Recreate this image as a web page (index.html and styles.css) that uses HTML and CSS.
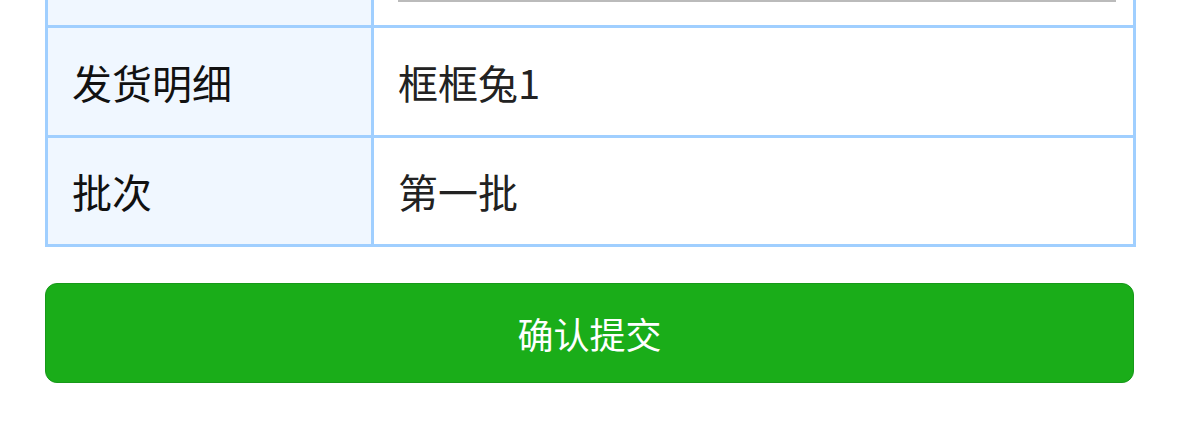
FILE: index.html
```html
<!DOCTYPE html>
<html lang="zh-CN">
<head>
<meta charset="utf-8">
<title>发货</title>
<link rel="stylesheet" href="styles.css">
</head>
<body>
<div class="page">
  <div class="grid">
    <div class="cell label top"></div>
    <div class="cell value top"><div class="input-line"></div></div>
    <div class="cell label">发货明细</div>
    <div class="cell value">框框兔1</div>
    <div class="cell label">批次</div>
    <div class="cell value">第一批</div>
  </div>
  <button class="submit">确认提交</button>
</div>
</body>
</html>
```
FILE: styles.css
```css
html, body {
  margin: 0;
  padding: 0;
  background: #ffffff;
}
body {
  font-family: "Noto Sans CJK SC", "Noto Sans", sans-serif;
}
.page {
  width: 1091px;
  margin-left: 45px;
}
.grid {
  display: grid;
  grid-template-columns: 323px 1fr;
  grid-template-rows: 25px 107px 106px;
  gap: 3px;
  padding: 0 3px 3px 3px;
  background: #a0cfff;
}
.cell {
  display: flex;
  align-items: center;
  padding: 0 17px 0 24px;
  font-size: 40px;
  line-height: 1;
}
.label {
  background: #f0f7ff;
  color: #111111;
}
.value {
  background: #ffffff;
  color: #222222;
}
.cell.top {
  align-items: flex-start;
}
.input-line {
  width: 100%;
  height: 2px;
  background: #bbbbbb;
}
.submit {
  display: block;
  box-sizing: border-box;
  width: 1089px;
  height: 100px;
  margin: 36px 0 0 0;
  padding: 0;
  border: 1px solid #17991a;
  border-radius: 12px;
  background: #1aad19;
  color: #ffffff;
  font-family: "Noto Sans CJK SC", "Noto Sans", sans-serif;
  font-size: 36px;
  line-height: 1;
}
```
